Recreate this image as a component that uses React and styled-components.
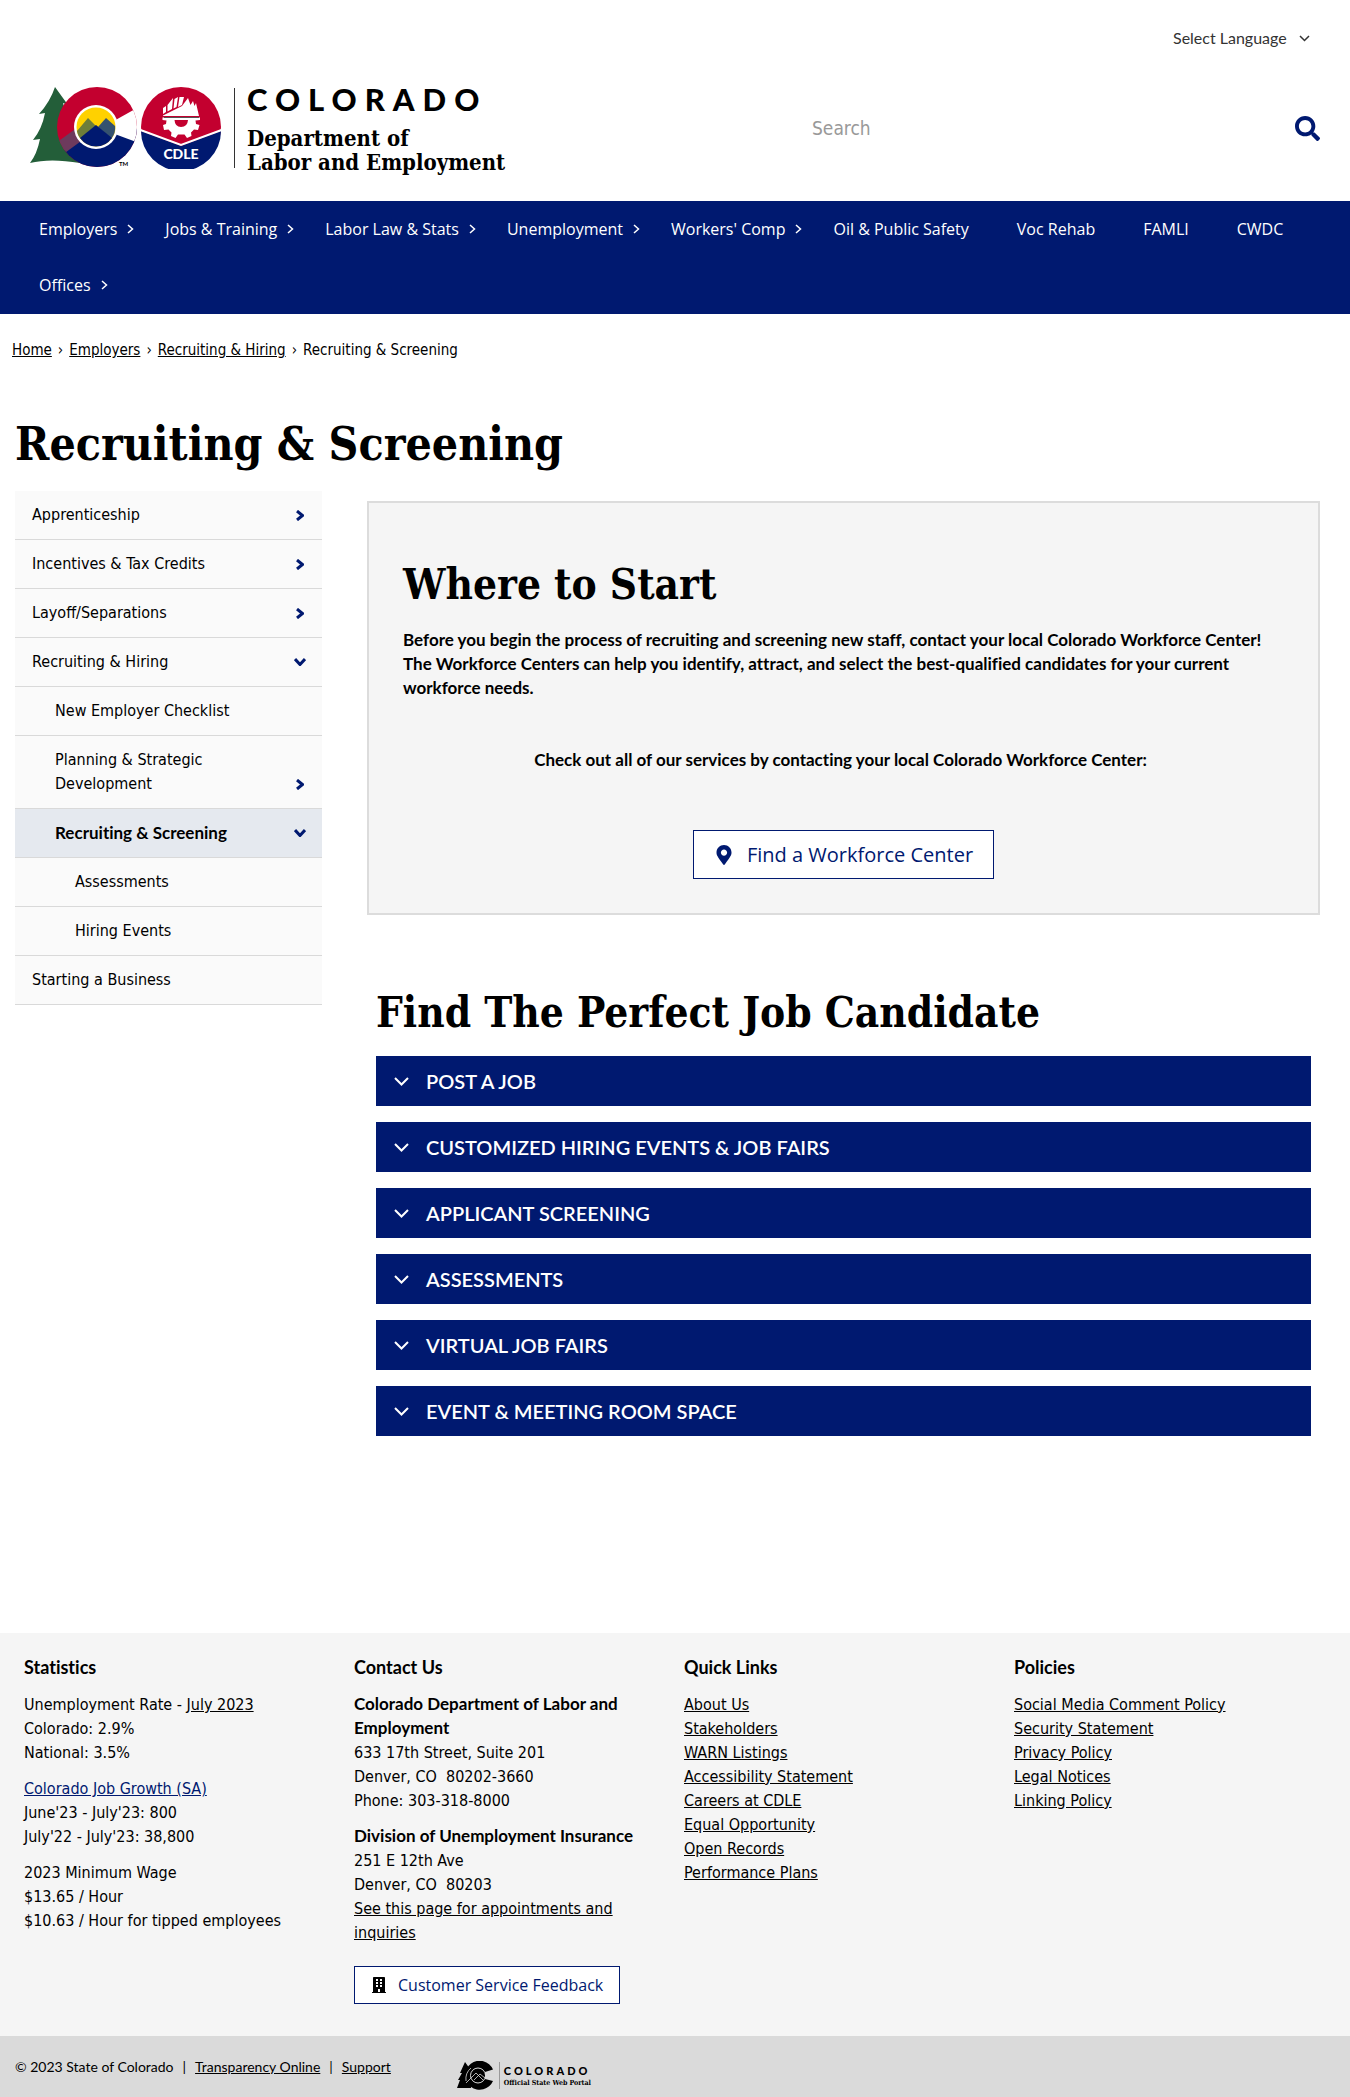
import React, { useState } from "react";
import styled, { createGlobalStyle, css } from "styled-components";
import { FaSearch, FaMapMarkerAlt, FaBuilding } from "react-icons/fa";

const navy = "#001970";
const bodyFont = `"DejaVu Sans Condensed", "DejaVu Sans", sans-serif`;
const strongFont = `Lato, "Open Sans", sans-serif`;
const navFont = `"Open Sans", "Noto Sans", sans-serif`;
const slabFont = `"DejaVu Serif Condensed", "DejaVu Serif", serif`;

const strongText = (weight, size, line) => css`
  font: ${weight} ${size}px/${line}px ${strongFont};
  font-variant-ligatures: none;
`;

const GlobalStyle = createGlobalStyle`
  *, *::before, *::after { box-sizing: border-box; }
  body {
    margin: 0;
    background: #fff;
    color: #000;
    font: 16px/24px ${bodyFont};
  }
  a { color: inherit; }
  h1, h2, h3, p, ul, ol { margin: 0; padding: 0; }
  ul, ol { list-style: none; }
  button { font: inherit; color: inherit; cursor: pointer; }
`;

/* ---------- header ---------- */

const TopBar = styled.div`
  display: flex;
  justify-content: flex-end;
  padding: 26px 40px 0;
`;

const LanguagePicker = styled.label`
  display: flex;
  align-items: center;
  gap: 12px;
  color: #333;
`;

const LanguageSelect = styled.select`
  appearance: none;
  border: 0;
  padding: 0;
  background: transparent;
  color: inherit;
  ${strongText(400, 16, 24)}
`;

const Masthead = styled.div`
  display: flex;
  align-items: center;
  justify-content: space-between;
  padding: 37px 30px 32px;
`;

const Brand = styled.a`
  display: flex;
  align-items: center;
  color: #000;
  text-decoration: none;
`;

const BrandText = styled.span`
  display: flex;
  flex-direction: column;
  height: 80px;
  margin-left: 12px;
  padding-left: 12px;
  border-left: 1px solid #333;
`;

const BrandState = styled.span`
  ${strongText(900, 31, 22)}
  letter-spacing: 8px;
  padding-bottom: 16px;
`;

const BrandUnit = styled.span`
  font: 700 22px/24px ${slabFont};
`;

const SearchForm = styled.form`
  display: flex;
  align-items: center;
  width: 40%;
`;

const SearchInput = styled.input`
  flex: 1;
  min-width: 0;
  border: 0;
  padding: 8px;
  font: 19px/24px ${bodyFont};
  background: transparent;
  &::placeholder { color: #999; opacity: 1; }
`;

const IconButton = styled.button`
  display: flex;
  border: 0;
  padding: 0;
  background: transparent;
  color: ${navy};
`;

const MainNav = styled.nav`
  background: ${navy};
  color: #fff;
`;

const NavList = styled.ul`
  display: flex;
  flex-wrap: wrap;
  padding: 0 0 1px 15px;
`;

const NavItem = styled.li`
  display: flex;
  align-items: center;
  height: 56px;
  padding: 0 ${(p) => (p.$menu ? 7 : 24)}px 0 24px;
  font: 16px/24px ${navFont};
`;

const NavLink = styled.a`
  text-decoration: none;
`;

const NavToggle = styled.button`
  display: flex;
  border: 0;
  padding: 0 0 0 10px;
  background: transparent;
`;

/* ---------- breadcrumb and title ---------- */

const Breadcrumb = styled.ol`
  display: flex;
  flex-wrap: wrap;
  padding: 24px 12px 0;
  font-size: 15px;
`;

const Crumb = styled.li`
  &:not(:last-child)::after {
    content: "›";
    padding: 0 6px;
  }
`;

const PageTitle = styled.h1`
  padding: 50px 15px 0;
  font: 700 46px/64px ${slabFont};
`;

const Columns = styled.main`
  display: grid;
  grid-template-columns: 307px minmax(0, 1fr);
  gap: 45px;
  padding: 15px 30px 197px 15px;
`;

/* ---------- side menu ---------- */

const indents = [17, 40, 60];

const SideRow = styled.li`
  display: flex;
  align-items: flex-end;
  justify-content: space-between;
  padding: 12px 16px 12px ${(p) => indents[p.$level]}px;
  border-bottom: 1px solid #d9d9d9;
  background: #fafafa;
  ${(p) =>
    p.$current &&
    css`
      background: #e5e9ef;
      ${strongText(700, 17, 24)}
    `}
`;

const SideLink = styled.a`
  max-width: 180px;
  text-decoration: none;
`;

const SideToggle = styled(IconButton)`
  width: 12px;
  height: 24px;
  align-items: center;
  justify-content: center;
`;

/* ---------- content ---------- */

const SectionTitle = styled.h2`
  font: 700 42px/56px ${slabFont};
`;

const StartPanel = styled.section`
  border: 2px solid #dcdcdc;
  background: #f5f5f5;
  margin-top: 10px;
  padding: 54px 34px 34px;
`;

const Lead = styled.p`
  padding-top: 15px;
  ${strongText(700, 17, 24)}
`;

const CenterLead = styled(Lead)`
  padding: 48px 6px 58px 0;
  text-align: center;
`;

const PanelAction = styled.div`
  display: flex;
  justify-content: center;
`;

const OutlineLink = styled.a`
  display: inline-flex;
  align-items: center;
  gap: ${(p) => (p.$large ? 13 : 11)}px;
  height: ${(p) => (p.$large ? 49 : 38)}px;
  padding: 0 ${(p) => (p.$large ? 20 : 16)}px;
  border: 1px solid ${navy};
  background: #fff;
  color: ${navy};
  text-decoration: none;
  font: ${(p) => (p.$large ? 20 : 16)}px/28px ${navFont};
`;

const JobSection = styled.section`
  padding: 70px 9px 0;
`;

const Accordion = styled.div`
  display: grid;
  gap: 16px;
  padding-top: 15px;
`;

const AccordionButton = styled.button`
  display: flex;
  align-items: center;
  gap: 17px;
  width: 100%;
  height: 50px;
  border: 0;
  padding: 0 18px;
  background: ${navy};
  color: #fff;
  text-align: left;
  ${strongText(600, 20, 24)}
`;

const Panel = styled.div`
  padding: 12px 50px;
`;

/* ---------- footer ---------- */

const FooterGrid = styled.div`
  display: grid;
  grid-template-columns: repeat(4, minmax(0, 1fr));
  background: #f5f5f5;
  padding: 20px 6px 32px 24px;
`;

const FooterColumn = styled.section`
  display: grid;
  align-content: start;
  gap: 12px;
  padding-right: 50px;
`;

const FooterTitle = styled.h2`
  ${strongText(700, 18, 28)}
`;

const Strong = styled.strong`
  ${strongText(700, 17, 18)}
`;

const GrowthLink = styled.a`
  color: ${navy};
`;

const FeedbackSlot = styled.div`
  display: flex;
  padding-top: 9px;
`;

const LegalBar = styled.div`
  display: flex;
  align-items: flex-start;
  background: #dadada;
  padding: 19px 15px 0;
  height: 62px;
  ${strongText(400, 14, 24)}
`;

const LegalItem = styled.span`
  & + &::before {
    content: "|";
    padding: 0 9px;
  }
`;

const PortalBrand = styled(Brand)`
  margin: 6px 0 0 66px;
`;

const PortalText = styled.span`
  display: flex;
  flex-direction: column;
  margin-left: 5px;
  padding: 2px 0 0 4px;
  border-left: 1px solid #999;
`;

const PortalState = styled.span`
  ${strongText(900, 11, 13)}
  letter-spacing: 3px;
`;

const PortalName = styled.span`
  font: 700 7px/12px ${slabFont};
`;

/* ---------- drawings ---------- */

const Chevron = ({ width, height, stroke = 2 }) => (
  <svg width={width} height={height} viewBox={`0 0 ${width} ${height}`} fill="none" stroke="currentColor" strokeWidth={stroke} aria-hidden="true">
    {width < height ? (
      <path d={`M1 1L${width - 1.5} ${height / 2}L1 ${height - 1}`} />
    ) : (
      <path d={`M1 1L${width / 2} ${height - 1.5}L${width - 1} 1`} />
    )}
  </svg>
);

const StateMark = () => (
  <svg width="192" height="82" viewBox="30 88 192 82" role="img" aria-label="State of Colorado, CDLE">
    <clipPath id="c-disc">
      <circle cx="97" cy="128" r="40" />
    </clipPath>
    <path fill="#235e39" d="M55 88L68 106L63 104L80 164Q50 159 30 164Q37 155 40 140L33 141Q42 130 45 114L39 115Q50 103 55 88Z" />
    <g clipPath="url(#c-disc)">
      <rect x="57" y="88" width="80" height="80" fill="#c3002f" />
      <path fill="#001970" d="M57 158L88 130L140 130V168H57Z" />
      <path fill="#6d3a5d" d="M56 144L78 128L84 140L62 156Z" />
      <path fill="#fff" d="M112 123L137 109H142V145L112 134Z" />
    </g>
    <circle cx="96" cy="128" r="22" fill="#fff" />
    <circle cx="96" cy="128" r="19.5" fill="#ffd100" />
    <path fill="#6d7d3a" d="M77 132L88 119L96 127L82 141Q78 138 77 132Z" />
    <path fill="#35526f" d="M98 128L106 119L115 127Q116 134 111 140Z" />
    <path fill="#001970" d="M80 139L96 126L112 139Q106 147.500 96 147.500Q86 147.500 80 139Z" />
    <circle cx="181" cy="128" r="40" fill="#c3002f" />
    <path fill="#001970" d="M141 132L181 147L221 132A40 40 0 0 1 141 132Z" />
    <path fill="none" stroke="#fff" strokeWidth="2" d="M140.500 131L181 146L221.500 131" />
    <path fill="#fff" d="M162.500 118.500H200V121L195.500 121.500L196 125L199.500 126L198 131L194 130.500L191 133.500L191.500 137L187 139L184.500 135.500H178L175.500 139L171 137L171.500 133.500L168.500 130.500L164 131L163 126L166 125L166.500 121.500L162.500 121Z" />
    <path fill="#c3002f" d="M174.500 121H188Q187.500 128 181 128Q175 128 174.500 121Z" />
    <path fill="#fff" d="M163 109L166 107V113L163 115ZM167.500 106L173 99L172 110L167.500 112.500ZM174.500 100L178 98L176.500 108L173.500 109.500ZM179.500 98L184 98L182 106L178 108Z" />
    <path fill="#fff" d="M163 116.500L182 107L188 99L190.500 106L193 102L194.500 107L196 104L199 117H163Z" />
    <path fill="none" stroke="#555" strokeWidth="1" d="M164 118.500H199" />
    <text x="181" y="160" textAnchor="middle" fill="#fff" fontFamily="Lato, sans-serif" fontWeight="900" fontSize="14">CDLE</text>
    <text x="119" y="167" fill="#000" fontFamily="Lato, sans-serif" fontWeight="700" fontSize="6">TM</text>
  </svg>
);

const PortalMark = () => (
  <svg width="37" height="29" viewBox="0 0 37 29" aria-hidden="true">
    <path d="M8 1L13 8L14 27H0L3 19H1L5 12H3Z" />
    <path d="M36 8.500A14.500 14.500 0 1 0 36 20L28 18V11Z" />
    <g fill="none" stroke="#dadada">
      <circle cx="21" cy="14.500" r="7.500" />
      <path d="M9 22L19 12L26 19M17 19L23 13L28 17M14 7Q8 12 9 20" strokeWidth="0.800" />
    </g>
  </svg>
);

/* ---------- data ---------- */

const navItems = [
  ["Employers", true],
  ["Jobs & Training", true],
  ["Labor Law & Stats", true],
  ["Unemployment", true],
  ["Workers' Comp", true],
  ["Oil & Public Safety", false],
  ["Voc Rehab", false],
  ["FAMLI", false],
  ["CWDC", false],
  ["Offices", true],
];

const sideItems = [
  { label: "Apprenticeship", level: 0, menu: "closed" },
  { label: "Incentives & Tax Credits", level: 0, menu: "closed" },
  { label: "Layoff/Separations", level: 0, menu: "closed" },
  { label: "Recruiting & Hiring", level: 0, menu: "open" },
  { label: "New Employer Checklist", level: 1 },
  { label: "Planning & Strategic Development", level: 1, menu: "closed" },
  { label: "Recruiting & Screening", level: 1, menu: "open", current: true },
  { label: "Assessments", level: 2 },
  { label: "Hiring Events", level: 2 },
  { label: "Starting a Business", level: 0 },
];

const topics = [
  "POST A JOB",
  "CUSTOMIZED HIRING EVENTS & JOB FAIRS",
  "APPLICANT SCREENING",
  "ASSESSMENTS",
  "VIRTUAL JOB FAIRS",
  "EVENT & MEETING ROOM SPACE",
];

const quickLinks = [
  "About Us",
  "Stakeholders",
  "WARN Listings",
  "Accessibility Statement",
  "Careers at CDLE",
  "Equal Opportunity",
  "Open Records",
  "Performance Plans",
];

const policies = ["Social Media Comment Policy", "Security Statement", "Privacy Policy", "Legal Notices", "Linking Policy"];

const LinkList = ({ items }) => (
  <ul>
    {items.map((item) => (
      <li key={item}>
        <a href="#">{item}</a>
      </li>
    ))}
  </ul>
);

export default function App() {
  const [openTopic, setOpenTopic] = useState(null);

  return (
    <>
      <GlobalStyle />
      <header>
        <TopBar>
          <LanguagePicker>
            <LanguageSelect aria-label="Select Language">
              <option>Select Language</option>
            </LanguageSelect>
            <Chevron width={11} height={7} stroke={1.5} />
          </LanguagePicker>
        </TopBar>
        <Masthead>
          <Brand href="#">
            <StateMark />
            <BrandText>
              <BrandState>COLORADO</BrandState>
              <BrandUnit>Department of</BrandUnit>
              <BrandUnit>Labor and Employment</BrandUnit>
            </BrandText>
          </Brand>
          <SearchForm role="search" onSubmit={(e) => e.preventDefault()}>
            <SearchInput type="search" placeholder="Search" aria-label="Search" />
            <IconButton type="submit" aria-label="Submit search">
              <FaSearch size={25} />
            </IconButton>
          </SearchForm>
        </Masthead>
        <MainNav>
          <NavList>
            {navItems.map(([label, menu]) => (
              <NavItem key={label} $menu={menu}>
                <NavLink href="#">{label}</NavLink>
                {menu && (
                  <NavToggle aria-label={`Open ${label} menu`}>
                    <Chevron width={7} height={10} stroke={1.5} />
                  </NavToggle>
                )}
              </NavItem>
            ))}
          </NavList>
        </MainNav>
      </header>

      <nav aria-label="Breadcrumb">
        <Breadcrumb>
          <Crumb><a href="#">Home</a></Crumb>
          <Crumb><a href="#">Employers</a></Crumb>
          <Crumb><a href="#">Recruiting &amp; Hiring</a></Crumb>
          <Crumb>Recruiting &amp; Screening</Crumb>
        </Breadcrumb>
      </nav>

      <PageTitle>Recruiting &amp; Screening</PageTitle>

      <Columns>
        <nav aria-label="Employers">
          <ul>
            {sideItems.map((item) => (
              <SideRow key={item.label} $level={item.level} $current={item.current}>
                <SideLink href="#">{item.label}</SideLink>
                {item.menu && (
                  <SideToggle aria-label={`Toggle ${item.label}`} aria-expanded={item.menu === "open"}>
                    {item.menu === "open" ? (
                      <Chevron width={12} height={8} stroke={3} />
                    ) : (
                      <Chevron width={8} height={11} stroke={3} />
                    )}
                  </SideToggle>
                )}
              </SideRow>
            ))}
          </ul>
        </nav>

        <div>
          <StartPanel>
            <SectionTitle>Where to Start</SectionTitle>
            <Lead>
              Before you begin the process of recruiting and screening new staff, contact your local Colorado Workforce
              Center! The Workforce Centers can help you identify, attract, and select the best-qualified candidates for
              your current workforce needs.
            </Lead>
            <CenterLead>Check out all of our services by contacting your local Colorado Workforce Center:</CenterLead>
            <PanelAction>
              <OutlineLink href="#" $large>
                <FaMapMarkerAlt size={20} />
                Find a Workforce Center
              </OutlineLink>
            </PanelAction>
          </StartPanel>

          <JobSection>
            <SectionTitle>Find The Perfect Job Candidate</SectionTitle>
            <Accordion>
              {topics.map((topic) => (
                <div key={topic}>
                  <h3>
                    <AccordionButton
                      aria-expanded={openTopic === topic}
                      onClick={() => setOpenTopic(openTopic === topic ? null : topic)}
                    >
                      <Chevron width={15} height={9} />
                      {topic}
                    </AccordionButton>
                  </h3>
                  {openTopic === topic && <Panel />}
                </div>
              ))}
            </Accordion>
          </JobSection>
        </div>
      </Columns>

      <footer>
        <FooterGrid>
          <FooterColumn>
            <FooterTitle>Statistics</FooterTitle>
            <p>
              Unemployment Rate - <a href="#">July 2023</a>
              <br />
              Colorado: 2.9%
              <br />
              National: 3.5%
            </p>
            <p>
              <GrowthLink href="#">Colorado Job Growth (SA)</GrowthLink>
              <br />
              June'23 - July'23: 800
              <br />
              July'22 - July'23: 38,800
            </p>
            <p>
              2023 Minimum Wage
              <br />
              $13.65 / Hour
              <br />
              $10.63 / Hour for tipped employees
            </p>
          </FooterColumn>
          <FooterColumn>
            <FooterTitle>Contact Us</FooterTitle>
            <p>
              <Strong>Colorado Department of Labor and Employment</Strong>
              <br />
              633 17th Street, Suite 201
              <br />
              Denver, CO&nbsp; 80202-3660
              <br />
              Phone: 303-318-8000
            </p>
            <p>
              <Strong>Division of Unemployment Insurance</Strong>
              <br />
              251 E 12th Ave
              <br />
              Denver, CO&nbsp; 80203
              <br />
              <a href="#">See this page for appointments and inquiries</a>
            </p>
            <FeedbackSlot>
              <OutlineLink href="#">
                <FaBuilding size={16} color="#000" />
                Customer Service Feedback
              </OutlineLink>
            </FeedbackSlot>
          </FooterColumn>
          <FooterColumn>
            <FooterTitle>Quick Links</FooterTitle>
            <LinkList items={quickLinks} />
          </FooterColumn>
          <FooterColumn>
            <FooterTitle>Policies</FooterTitle>
            <LinkList items={policies} />
          </FooterColumn>
        </FooterGrid>
        <LegalBar>
          <LegalItem>© 2023 State of Colorado</LegalItem>
          <LegalItem><a href="#">Transparency Online</a></LegalItem>
          <LegalItem><a href="#">Support</a></LegalItem>
          <PortalBrand href="#">
            <PortalMark />
            <PortalText>
              <PortalState>COLORADO</PortalState>
              <PortalName>Official State Web Portal</PortalName>
            </PortalText>
          </PortalBrand>
        </LegalBar>
      </footer>
    </>
  );
}
